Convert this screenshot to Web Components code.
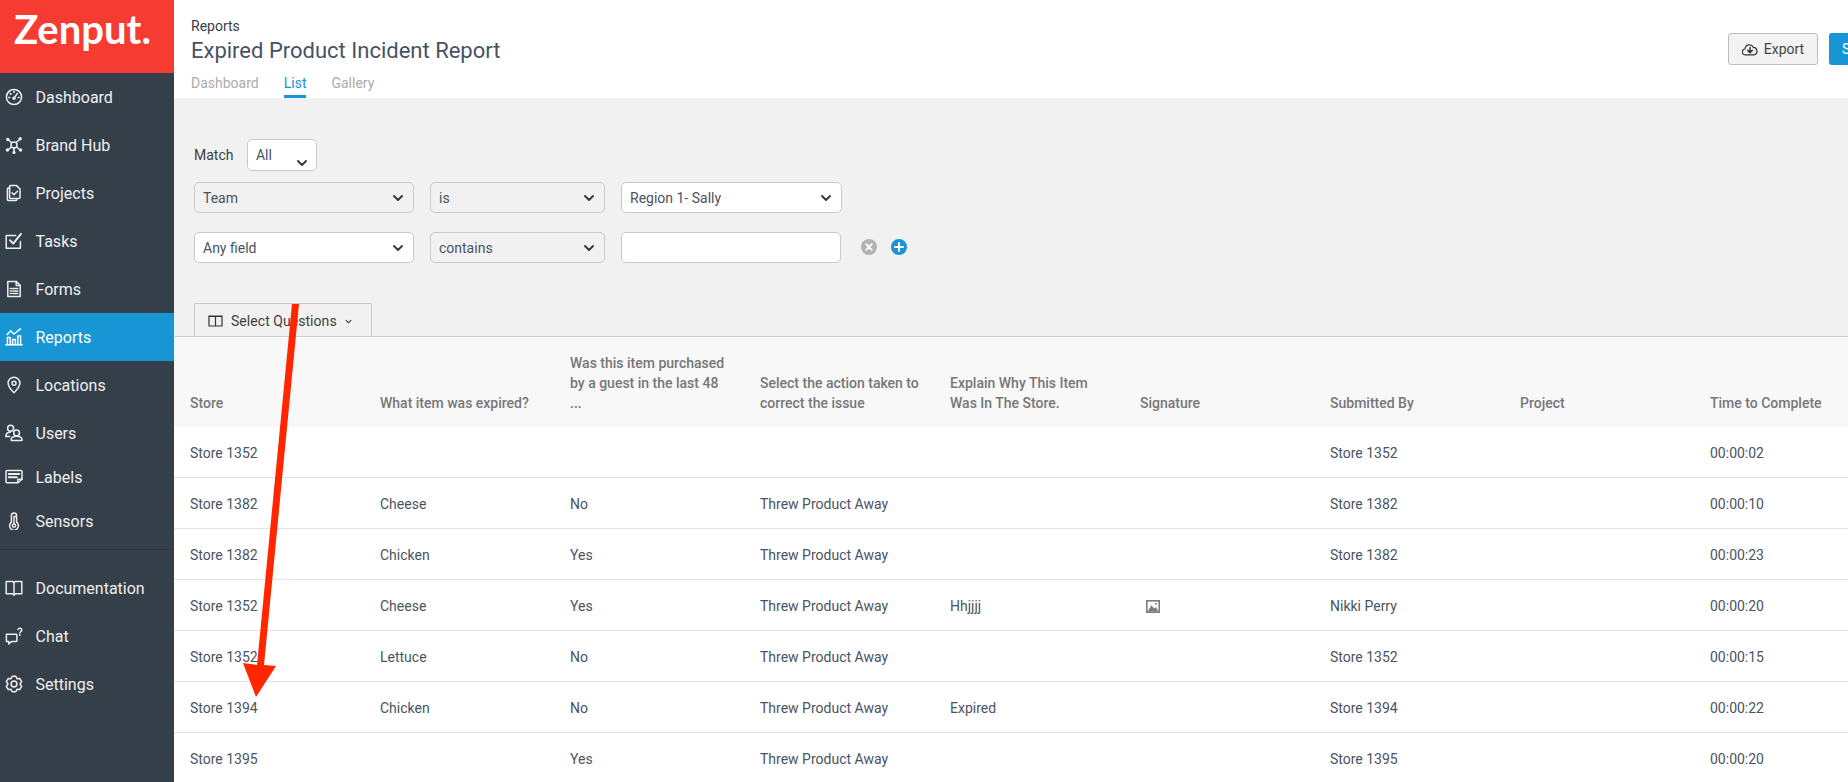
<!DOCTYPE html>
<html lang="en">
<head>
<meta charset="utf-8">
<title>Expired Product Incident Report</title>
<style>
  html, body { margin: 0; height: 782px; overflow: hidden; background: #fff; font-family: Roboto, "Liberation Sans", sans-serif; }
</style>
</head>
<body>
<z-app>
  <z-sidebar slot="side">
    <z-logo>Zenput.</z-logo>
    <z-nav icon="dashboard">Dashboard</z-nav>
    <z-nav icon="hub">Brand Hub</z-nav>
    <z-nav icon="projects">Projects</z-nav>
    <z-nav icon="tasks">Tasks</z-nav>
    <z-nav icon="forms">Forms</z-nav>
    <z-nav icon="reports" active>Reports</z-nav>
    <z-nav icon="locations">Locations</z-nav>
    <z-nav icon="users">Users</z-nav>
    <z-nav icon="labels" short>Labels</z-nav>
    <z-nav icon="sensors">Sensors</z-nav>
    <z-divider></z-divider>
    <z-nav icon="docs">Documentation</z-nav>
    <z-nav icon="chat">Chat</z-nav>
    <z-nav icon="settings">Settings</z-nav>
  </z-sidebar>
  <z-header>
    <span slot="crumb">Reports</span>
    <span slot="title">Expired Product Incident Report</span>
    <z-tab slot="tabs">Dashboard</z-tab>
    <z-tab slot="tabs" active>List</z-tab>
    <z-tab slot="tabs">Gallery</z-tab>
    <z-export slot="actions">Export</z-export>
    <z-primary slot="actions">S</z-primary>
  </z-header>
  <z-filters>
    <z-match-row>
      <span slot="label">Match</span>
      <z-select slot="control" w="70" low>All</z-select>
    </z-match-row>
    <z-filter-row>
      <z-select w="220" off>Team</z-select>
      <z-select w="175" off>is</z-select>
      <z-select w="221">Region 1- Sally</z-select>
    </z-filter-row>
    <z-filter-row>
      <z-select w="220">Any field</z-select>
      <z-select w="175" off>contains</z-select>
      <z-select w="220" blank></z-select>
      <z-round kind="x"></z-round>
      <z-round kind="plus"></z-round>
    </z-filter-row>
    <z-columns-tab>Select Questions</z-columns-tab>
  </z-filters>
  <z-table>
    <z-row head cells="Store|What item was expired?|Was this item purchased by a guest in the last 48 ...|Select the action taken to correct the issue|Explain Why This Item Was In The Store.|Signature|Submitted By|Project|Time to Complete"></z-row>
    <z-row cells="Store 1352||||||Store 1352||00:00:02"></z-row>
    <z-row cells="Store 1382|Cheese|No|Threw Product Away|||Store 1382||00:00:10"></z-row>
    <z-row cells="Store 1382|Chicken|Yes|Threw Product Away|||Store 1382||00:00:23"></z-row>
    <z-row cells="Store 1352|Cheese|Yes|Threw Product Away|Hhjjjj|@img|Nikki Perry||00:00:20"></z-row>
    <z-row cells="Store 1352|Lettuce|No|Threw Product Away|||Store 1352||00:00:15"></z-row>
    <z-row cells="Store 1394|Chicken|No|Threw Product Away|Expired||Store 1394||00:00:22"></z-row>
    <z-row cells="Store 1395||Yes|Threw Product Away|||Store 1395||00:00:20"></z-row>
  </z-table>
</z-app>
<z-arrow></z-arrow>

<script>
const gearPts = (() => {
  const p = [];
  for (let k = 0; k < 6; k++) {
    const a = -90 + 60 * k;
    for (const [d, r] of [[-13, 8], [13, 8], [30, 6]]) {
      const t = (a + d) * Math.PI / 180;
      p.push((9 + r * Math.cos(t)).toFixed(2) + ',' + (9 + r * Math.sin(t)).toFixed(2));
    }
  }
  return p.join(' ');
})();

const ICONS = {
  dashboard: '<circle cx="9" cy="9" r="7.6"/><path d="M9 10.2 12.4 5.4"/><circle cx="9" cy="10.2" r="1"/><path d="M3.7 9.5h1M13.3 9.5h1M9 3.6v1M5.2 5.4l.7.7"/>',
  hub: '<path d="M3 3.5 15 14M15 3 3 14M9 9v7"/><circle cx="9" cy="9" r="3" fill="#353f49"/><g fill="#eee" stroke="none"><circle cx="2.8" cy="3.5" r="1.7"/><circle cx="15.2" cy="2.8" r="1.7"/><circle cx="2.4" cy="14" r="1.7"/><circle cx="15.6" cy="14" r="1.7"/><circle cx="9" cy="16.4" r="1.6"/></g>',
  projects: '<path d="M4.6 4H3.4c-.6 0-1 .4-1 1v10.6c0 .6.4 1 1 1h7.4c.6 0 1-.4 1-1"/><path d="M5.6 1.6h6l3.4 3.4v8.6c0 .6-.4 1-1 1H5.6c-.6 0-1-.4-1-1V2.6c0-.6.4-1 1-1z"/><path d="M7 8.8l2 2 3.4-3.6"/>',
  tasks: '<path d="M15.4 9.5v6.8H1.2V3.6h9.6"/><path stroke-width="1.9" d="M5 8.2l3.2 3.4L16 1.8"/>',
  forms: '<path d="M2.8 1.4h8.4l4 4v11.2H2.8z"/><path d="M11.2 1.4v4h4"/><path d="M5.2 8.4h1.2M7.8 8.4h5M5.2 11h1.2M7.8 11h5M5.2 13.6h1.2M7.8 13.6h5"/>',
  reports: '<path d="M.8 16.8h16.4"/><path d="M2.4 16.8V9.4h2.8v7.4M7.6 16.8v-5.2h2.8v5.2M12.8 16.8V8h2.8v8.8"/><path d="M2.2 6.6 5.6 3l3.4 3 6.2-5"/><circle cx="5.6" cy="3" r=".9" fill="#fff" stroke="none"/><circle cx="15.2" cy="1.4" r=".9" fill="#fff" stroke="none"/>',
  locations: '<path d="M9 1.2a5.9 5.9 0 0 1 5.9 5.9c0 3.4-3.3 7.2-5.9 9.7-2.6-2.5-5.9-6.3-5.9-9.7A5.9 5.9 0 0 1 9 1.2z"/><circle cx="9" cy="7.2" r="2"/>',
  users: '<circle cx="5.6" cy="4.2" r="3"/><path d="M.8 12.6c0-2.6 1.6-4.4 4.4-4.4"/><circle cx="11.6" cy="9" r="2.9"/><path d="M6.2 16.4v-.8c0-1.8 2.2-3.4 5.4-3.4s5.4 1.6 5.4 3.4v.8z"/><path d="M.8 12.6h4"/>',
  labels: '<path d="M2 2.6h14c.6 0 1 .4 1 1v7.6l-4 3.6H2c-.6 0-1-.4-1-1V3.6c0-.6.4-1 1-1z"/><path stroke-width="1.9" d="M3.8 6h10.4M3.8 9.2h8"/><path d="M12.8 14.6v-3.4H17"/>',
  sensors: '<path d="M6.4 3.6a2.6 2.6 0 0 1 5.2 0v6.6a4.4 4.4 0 1 1-5.2 0z"/><circle cx="9" cy="13.6" r="1.7"/><path d="M9 5v6.6M9 4.4h2.2"/>',
  docs: '<path d="M1.2 2.4h6.4L9 3.6l1.4-1.2h6.4v12.4h-6.4L9 16l-1.4-1.2H1.2z"/><path d="M9 3.6V16"/>',
  chat: '<path d="M1.4 7.2h9.8c.4 0 .7.3.7.7v5.8c0 .4-.3.7-.7.7H6.6L3.8 17v-2.6H1.4z"/><path d="M13 2.6c.3-1 1.2-1.6 2.2-1.4 1 .2 1.7 1 1.6 2-.1 1.2-1.8 1.4-1.9 2.8"/><circle cx="14.9" cy="8" r=".9" fill="#eee" stroke="none"/>',
  settings: '<polygon points="' + gearPts + '"/><circle cx="9" cy="9" r="2.9"/>'
};

function shadow(el, html) {
  const r = el.shadowRoot || el.attachShadow({ mode: 'open' });
  r.innerHTML = html;
  return r;
}

function simple(name, html) {
  customElements.define(name, class extends HTMLElement {
    connectedCallback() { shadow(this, html); }
  });
}

simple('z-app', `<style>
  :host { display: grid; grid-template-columns: 174px 1674px; width: 1848px; height: 782px; overflow: hidden; }
  .side { display: flex; min-height: 0; }
  .main { display: flex; flex-direction: column; min-width: 0; min-height: 0; }
</style><div class="side"><slot name="side"></slot></div><div class="main"><slot></slot></div>`);

simple('z-sidebar', `<style>
  :host { display: flex; flex-direction: column; width: 174px; height: 782px; background: #353f49; color: #eee; }
</style><slot></slot>`);

simple('z-logo', `<style>
  :host { display: block; height: 73px; background: #f63c32; color: #fff; box-sizing: border-box; padding-left: 14px; font: 700 40px/58px Lato, "Open Sans", sans-serif; overflow: hidden; flex: none; }
</style><slot></slot>`);

customElements.define('z-nav', class extends HTMLElement {
  connectedCallback() {
    const ic = ICONS[this.getAttribute('icon')] || '';
    shadow(this, `<style>
      :host { display: flex; align-items: center; gap: 12.5px; height: 48px; padding-left: 5px; font-size: 16px; color: #eef0f1; flex: none; }
      :host([short]) { height: 40px; }
      :host([active]) { background: #1795d4; color: #fff; }
      svg { width: 18px; height: 18px; flex: none; fill: none; stroke: #eee; stroke-width: 1.5; stroke-linejoin: round; stroke-linecap: round; }
      :host([active]) svg { stroke: #fff; }
    </style><svg viewBox="0 0 18 18">${ic}</svg><span><slot></slot></span>`);
  }
});

simple('z-divider', `<style>
  :host { display: block; height: 1px; background: #2c353e; margin: 4px 0 14px; flex: none; }
</style>`);

simple('z-header', `<style>
  :host { display: flex; justify-content: space-between; height: 99px; box-sizing: border-box; border-bottom: 1px solid #eef3f6; background: #fff; padding-left: 17px; flex: none; }
  .crumb { margin-top: 16px; font-size: 14px; line-height: 20px; color: #3a3f45; }
  .title { margin-top: 1px; font-size: 22px; line-height: 28px; color: #465366; }
  .tabs { display: flex; gap: 25px; }
  .actions { display: flex; align-items: flex-start; gap: 11px; padding-top: 33px; }
</style>
<div>
  <div class="crumb"><slot name="crumb"></slot></div>
  <div class="title"><slot name="title"></slot></div>
  <div class="tabs"><slot name="tabs"></slot></div>
</div>
<div class="actions"><slot name="actions"></slot></div>`);

simple('z-tab', `<style>
  :host { display: block; padding: 8px 0 2px; border-bottom: 3px solid transparent; font-size: 14px; line-height: 20px; color: #ababab; }
  :host([active]) { color: #1795d4; border-bottom-color: #1795d4; }
</style><slot></slot>`);

simple('z-export', `<style>
  :host { display: flex; align-items: center; justify-content: center; gap: 6px; width: 90px; height: 32px; box-sizing: border-box; border: 1px solid #bdbdbd; border-radius: 3px; background: #f3f3f3; color: #444; font-size: 14px; }
  svg { width: 16px; height: 13px; fill: none; stroke: #333; stroke-width: 1.2; stroke-linejoin: round; stroke-linecap: round; }
</style><svg viewBox="0 0 16 13"><path d="M4 11.8H3.4A2.9 2.9 0 0 1 3 6a4.4 4.4 0 0 1 8.4-1.6A3.8 3.8 0 0 1 12.4 11.8z"/><path d="M8 4.6V9.4M5.8 7.4 8 9.6l2.2-2.2" stroke-width="1.5"/></svg><span><slot></slot></span>`);

simple('z-primary', `<style>
  :host { display: flex; align-items: center; width: 19px; height: 32px; box-sizing: border-box; padding-left: 13px; background: #1795d4; color: #fff; border-radius: 3px 0 0 3px; font-size: 14px; overflow: hidden; }
</style><slot></slot>`);

simple('z-filters', `<style>
  :host { display: flex; flex-direction: column; align-items: flex-start; height: 237px; box-sizing: border-box; padding: 40px 0 0 20px; background: #f1f1f1; flex: none; }
</style><slot></slot>`);

simple('z-match-row', `<style>
  :host { display: flex; align-items: center; gap: 13.5px; height: 32px; margin-bottom: 11px; font-size: 14px; color: #3f3f3f; }
  span { margin-top: -1px; }
</style><span><slot name="label"></slot></span><slot name="control"></slot>`);

simple('z-filter-row', `<style>
  :host { display: flex; align-items: center; gap: 16px; height: 31px; margin-bottom: 19px; }
</style><slot></slot>`);

customElements.define('z-select', class extends HTMLElement {
  connectedCallback() {
    const w = this.getAttribute('w') || 100;
    const chev = this.hasAttribute('blank') ? '' : `<svg viewBox="0 0 10 6"><path d="M1 1l4 4 4-4"/></svg>`;
    shadow(this, `<style>
      :host { display: flex; align-items: center; justify-content: space-between; width: ${w}px; height: 31px; box-sizing: border-box; border: 1px solid #c9c9c9; border-radius: 5px; background: #fff; padding: 0 10px 0 8px; font-size: 14px; color: #4a5361; }
      :host([low]) { height: 32px; }
      :host([off]) { background: #f1f1f1; }
      :host([low]) svg { align-self: flex-end; margin-bottom: 4px; margin-right: -1px; }
      svg { width: 10px; height: 6px; fill: none; stroke: #333; stroke-width: 1.8; stroke-linecap: round; stroke-linejoin: round; }
    </style><span><slot></slot></span>${chev}`);
  }
});

customElements.define('z-round', class extends HTMLElement {
  connectedCallback() {
    const x = this.getAttribute('kind') === 'x';
    shadow(this, `<style>
      :host { display: block; width: 16px; height: 16px; flex: none; margin-left: ${x ? 4 : -2}px; margin-top: -2px; }
      svg { display: block; width: 16px; height: 16px; }
    </style><svg viewBox="0 0 16 16"><circle cx="8" cy="8" r="8" fill="${x ? '#b3b3b3' : '#1795d4'}"/><path d="${x ? 'M5.2 5.2l5.6 5.6M10.8 5.2l-5.6 5.6' : 'M8 4v8M4 8h8'}" stroke="#fff" stroke-width="${x ? 1.8 : 2}" stroke-linecap="round"/></svg>`);
  }
});

simple('z-columns-tab', `<style>
  :host { display: flex; align-items: center; width: 178px; height: 33px; box-sizing: border-box; margin-top: 21px; padding: 2px 0 0 13px; border: 1px solid #c8c8c8; border-bottom: 0; border-radius: 2px 2px 0 0; font-size: 14px; color: #3f3f3f; letter-spacing: .05px; }
  .c { width: 15px; height: 12px; margin-right: 8px; fill: none; stroke: #333; stroke-width: 1.2; }
  .d { width: 7px; height: 5px; margin-left: 8px; fill: none; stroke: #333; stroke-width: 1.3; }
</style><svg class="c" viewBox="0 0 15 12"><path d="M1 1h13v10H1zM7.5 1v10M1 1.4h13"/></svg><span><slot></slot></span><svg class="d" viewBox="0 0 8 5"><path d="M1 1l3 3 3-3"/></svg>`);

simple('z-table', `<style>
  :host { display: block; flex: 1; min-height: 0; overflow: hidden; border-top: 1px solid #cfcfcf; background: #fff; }
</style><slot></slot>`);

customElements.define('z-row', class extends HTMLElement {
  connectedCallback() {
    const esc = s => s.replace(/&/g, '&amp;').replace(/</g, '&lt;');
    const img = `<svg class="img" viewBox="0 0 14 13"><rect width="14" height="13" fill="#7d7d7d"/><rect x="1.6" y="1.6" width="10.8" height="9.8" fill="#fff"/><path d="M1.6 11.4 5.4 5.2l2.8 3.4 1.6-1.6 2.6 4.4z" fill="#7d7d7d"/><circle cx="10" cy="3.8" r="1" fill="#7d7d7d"/></svg>`;
    const cells = this.getAttribute('cells').split('|').map(c =>
      `<div>${c === '@img' ? img : esc(c)}</div>`).join('');
    shadow(this, `<style>
      :host { display: grid; grid-template-columns: repeat(9, 190px); align-items: center; height: 51px; box-sizing: border-box; padding: 2px 0 0 16px; border-bottom: 1px solid #e3e3e3; font-size: 14px; line-height: 20px; color: #4a5361; }
      :host([head]) { height: 90px; align-items: end; padding: 0 0 14px 16px; border-bottom: 0; background: #f8f8f8; color: #777; font-weight: 500; }
      :host([head]) div { max-width: 160px; }
      .img { display: block; width: 14px; height: 13px; margin-left: 6px; }
    </style>${cells}`);
  }
});

simple('z-arrow', `<style>
  :host { position: absolute; left: 0; top: 0; width: 1848px; height: 782px; pointer-events: none; display: block; }
  svg { display: block; }
</style><svg width="1848" height="782" viewBox="0 0 1848 782"><path d="M292 304h7L264 665l12 1-20 31-13-34 14 2z" fill="#ff2600"/></svg>`);
</script>
</body>
</html>
